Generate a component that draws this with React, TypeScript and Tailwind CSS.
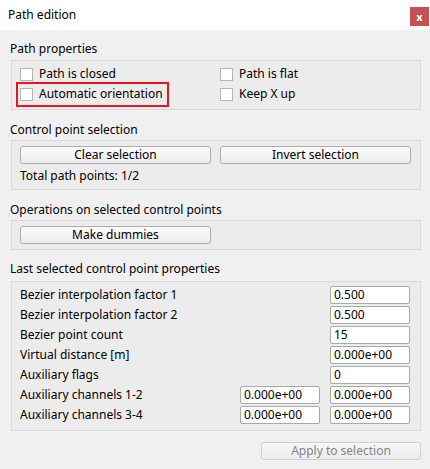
import React from "react";

const font = { fontFamily: '"Noto Sans", "Open Sans", sans-serif' };

function Checkbox({ label }: { label: string }) {
  return (
    <div className="flex h-[20px] items-center gap-[6px]">
      <div className="h-[13px] w-[13px] border border-[#b4b4b4] bg-white" />
      <span>{label}</span>
    </div>
  );
}

function Button({ label, className = "", disabled = false }: { label: string; className?: string; disabled?: boolean }) {
  return (
    <div
      className={
        "flex h-[18px] items-center justify-center rounded-[3px] border " +
        (disabled
          ? "border-[#cfcfcf] bg-gradient-to-b from-[#f7f7f7] to-[#ececec] text-[#838383] "
          : "border-[#adadad] bg-gradient-to-b from-[#fcfcfc] to-[#ececec] text-black ") +
        className
      }
    >
      {label}
    </div>
  );
}

function Field({ value }: { value: string }) {
  return (
    <div className="flex h-[18px] w-[80px] items-center rounded-[2px] border border-[#a9a9a9] bg-white pl-[3px] leading-none">
      {value}
    </div>
  );
}

function Row({ label, a, b }: { label: string; a?: string; b: string }) {
  return (
    <div className="flex h-[20px] items-center">
      <span className="flex-1">{label}</span>
      {a !== undefined && <Field value={a} />}
      <div className="ml-[10px]">
        <Field value={b} />
      </div>
    </div>
  );
}

function Label({ children, className = "" }: { children: React.ReactNode; className?: string }) {
  return <div className={"flex h-[20px] items-center pl-[10px] " + className}>{children}</div>;
}

const box = "ml-[11px] w-[410px] border border-[#d8d8d8] bg-[#ececec]";

export default function App() {
  return (
    <div className="h-[469px] w-[430px] bg-[#f0f0f0] text-[12px] text-black" style={font}>
      <div className="flex h-[30px] items-center justify-between bg-white pl-[8px] pr-[1px]">
        <span className="text-[12px]">Path edition</span>
        <div className="mt-[2px] flex h-[19px] w-[19px] items-center justify-center bg-[#c75050] text-[11px] font-bold leading-none text-white">
          x
        </div>
      </div>

      <Label className="mt-[9px]">Path properties</Label>
      <div className={box + " relative mt-[1px] h-[50px] pl-[8px] pt-[3px]"}>
        <div className="grid grid-cols-[200px_1fr]">
          <Checkbox label="Path is closed" />
          <Checkbox label="Path is flat" />
          <Checkbox label="Automatic orientation" />
          <Checkbox label="Keep X up" />
        </div>
        <div className="absolute left-[4px] top-[21px] h-[25px] w-[153px] border-2 border-[#e8141e]" />
      </div>

      <Label className="mt-[10px]">Control point selection</Label>
      <div className={box + " h-[50px] px-[8px] pt-[5px]"}>
        <div className="flex gap-[9px]">
          <Button label="Clear selection" className="w-[191px]" />
          <Button label="Invert selection" className="w-[191px]" />
        </div>
        <div className="mt-[2px] flex h-[20px] items-center">Total path points: 1/2</div>
      </div>

      <Label className="mt-[10px]">Operations on selected control points</Label>
      <div className={box + " h-[30px] px-[8px] pt-[5px]"}>
        <Button label="Make dummies" className="w-[191px]" />
      </div>

      <Label className="mt-[9px]">Last selected control point properties</Label>
      <div className={box + " mt-[2px] h-[150px] pl-[8px] pr-[10px] pt-[3px]"}>
        <Row label="Bezier interpolation factor 1" b="0.500" />
        <Row label="Bezier interpolation factor 2" b="0.500" />
        <Row label="Bezier point count" b="15" />
        <Row label="Virtual distance [m]" b="0.000e+00" />
        <Row label="Auxiliary flags" b="0" />
        <Row label="Auxiliary channels 1-2" a="0.000e+00" b="0.000e+00" />
        <Row label="Auxiliary channels 3-4" a="0.000e+00" b="0.000e+00" />
      </div>

      <div className="mt-[11px] flex justify-end pr-[9px]">
        <Button label="Apply to selection" className="h-[17px] w-[160px]" disabled />
      </div>
    </div>
  );
}
